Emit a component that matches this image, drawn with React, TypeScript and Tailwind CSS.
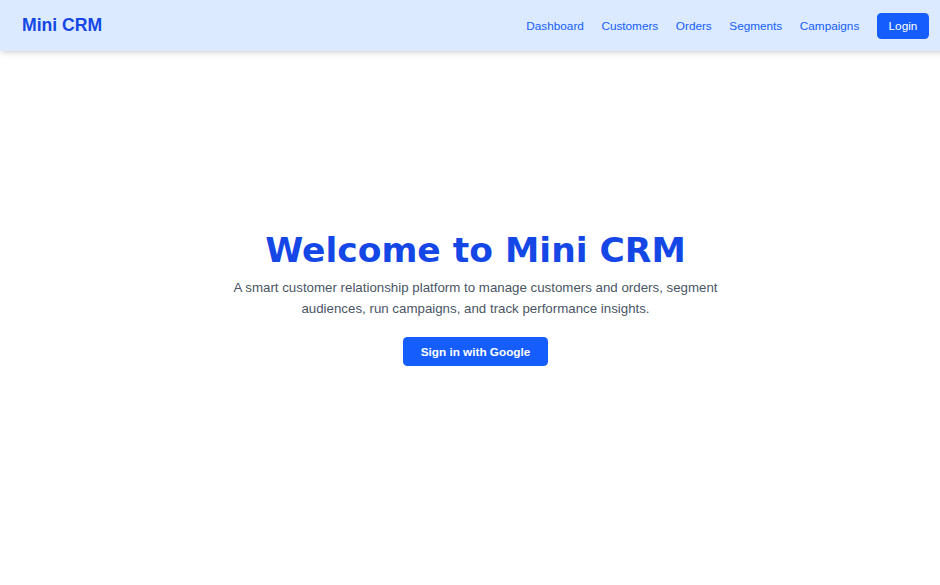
const links = ["Dashboard", "Customers", "Orders", "Segments", "Campaigns"];

const Navbar = () => {
  return (
    <nav className="bg-[#dbeafe] shadow-md">
      <div className="flex items-center justify-between px-[22px] py-[12.5px]">
        <span className="text-[17.6px] leading-[23.5px] font-bold text-[#1447e6]">Mini CRM</span>
        <div className="flex items-center gap-[17.6px]">
          {links.map((l) => (
            <a key={l} href="#" className="text-[11.75px] leading-[17.6px] text-[#155dfc]">
              {l}
            </a>
          ))}
          <button className="bg-[#155dfc] text-white text-[11.75px] leading-[17.6px] px-[11.7px] py-[4.4px] rounded-[4.4px]">
            Login
          </button>
        </div>
      </div>
    </nav>
  );
};

const Hero = () => {
  return (
    <main className="h-[495px] flex flex-col items-center justify-center text-center">
      <h1
        className="text-[34.5px] leading-[35.2px] font-bold text-[#1447e6] pt-[2px] mb-[9.7px]"
        style={{ fontFamily: '"DejaVu Sans", sans-serif' }}
      >
        Welcome to Mini CRM
      </h1>
      <p className="max-w-[500px] text-[13.3px] leading-[20.55px] text-[#4a5565] mb-[17.6px]">
        A smart customer relationship platform to manage customers and orders, segment audiences, run campaigns, and
        track performance insights.
      </p>
      <button className="bg-[#155dfc] text-white text-[11.75px] leading-[17.6px] font-semibold px-[17.6px] py-[5.9px] rounded-[4.4px]">
        Sign in with Google
      </button>
    </main>
  );
};

export default function App() {
  return (
    <div className="w-full overflow-hidden">
      <div className="w-[951px] min-h-screen bg-white font-['Liberation_Sans',Arial,sans-serif]">
        <Navbar />
        <Hero />
      </div>
    </div>
  );
}
